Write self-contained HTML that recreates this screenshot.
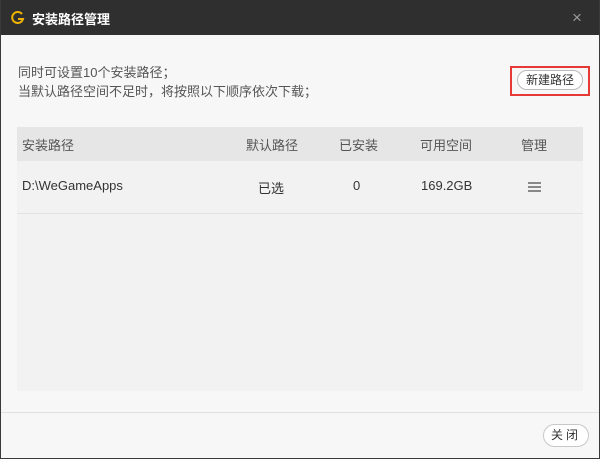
<!DOCTYPE html>
<html><head><meta charset="utf-8"><style>
*{margin:0;padding:0;box-sizing:border-box}
body{width:600px;height:459px;overflow:hidden;background:#3a3a3a;font-family:"Liberation Sans","Noto Sans CJK SC",sans-serif;position:relative}
.win{position:absolute;left:1px;top:0;width:598px;height:458px;background:#f7f7f7}
.title{position:absolute;left:0;top:0;width:598px;height:35px;background:#2f2f2f;color:#fff;font-size:13px;font-weight:bold}
.abs{position:absolute}
.t{font-size:13px;color:#555}
.th{font-size:13px;color:#555;position:absolute;top:135px}
.td{font-size:13px;color:#333;position:absolute;top:178px}
</style></head><body>
<div class="win">
<div class="title">
<svg class="abs" style="left:10px;top:10px" width="14" height="15" viewBox="0 0 14 15"><path d="M11 4 A5.5 5.5 0 1 0 12 9 L7 9" fill="none" stroke="#f0b400" stroke-width="2"/></svg>
<span class="abs" style="left:31px;top:9px">安装路径管理</span>
<span class="abs" style="left:571px;top:8px;color:#999;font-size:17px;font-weight:normal">×</span>
</div>
<div class="abs t" style="left:17px;top:62px">同时可设置10个安装路径；</div>
<div class="abs t" style="left:17px;top:81px">当默认路径空间不足时，将按照以下顺序依次下载；</div>
<div class="abs" style="left:509px;top:66px;width:80px;height:30px;border:2px solid #e53935"></div>
<div class="abs" style="left:516px;top:70px;width:66px;height:20px;border:1px solid #bbb;border-radius:10px;background:#fff;font-size:12px;color:#333;text-align:center;line-height:18px">新建路径</div>
<div class="abs" style="left:16px;top:127px;width:566px;height:264px;background:#f2f2f2"></div>
<div class="abs" style="left:16px;top:127px;width:566px;height:34px;background:#e6e6e6"></div>
<div class="abs" style="left:16px;top:213px;width:566px;height:1px;background:#e2e2e2"></div>
<div class="th" style="left:21px">安装路径</div>
<div class="th" style="left:245px">默认路径</div>
<div class="th" style="left:338px">已安装</div>
<div class="th" style="left:419px">可用空间</div>
<div class="th" style="left:520px">管理</div>
<div class="td" style="left:21px">D:\WeGameApps</div>
<div class="td" style="left:257px">已选</div>
<div class="td" style="left:352px">0</div>
<div class="td" style="left:420px">169.2GB</div>
<div class="abs" style="left:527px;top:182px;width:13px;height:2px;background:#888;box-shadow:0 4px #888,0 8px #888"></div>
<div class="abs" style="left:0;top:412px;width:598px;height:1px;background:#e0e0e0"></div>
<div class="abs" style="left:542px;top:424px;width:46px;height:23px;border:1px solid #c8c8c8;border-radius:12px;background:#fff;font-size:12px;color:#333;text-align:center;line-height:21px;letter-spacing:3px">关闭</div>
</div>
</body></html>
